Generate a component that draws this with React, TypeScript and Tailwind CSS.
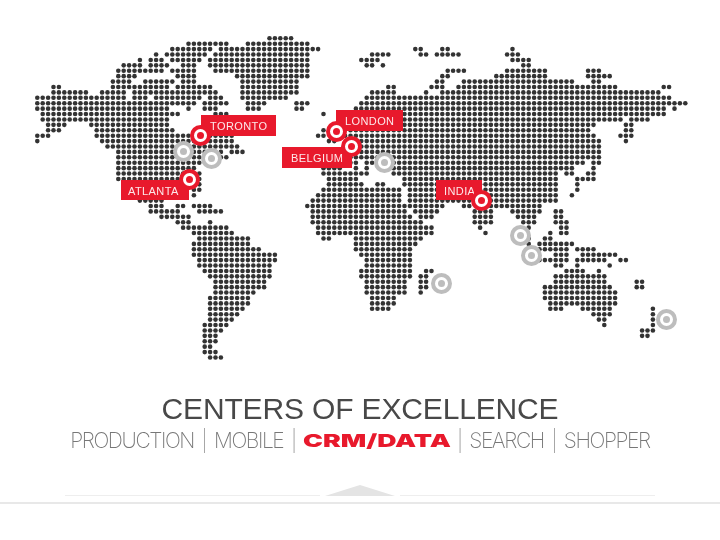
import React from 'react'

// dot map: each row is a list of [from, to] column spans
const ROWS: number[][][] = [
  [[43, 47]],
  [[28, 35], [39, 50]],
  [[25, 32], [34, 52], [70, 71], [75, 76], [88, 88]],
  [[22, 22], [24, 31], [33, 50], [62, 65], [71, 72], [74, 78], [87, 89]],
  [[19, 19], [21, 23], [25, 30], [32, 50], [60, 63], [88, 91]],
  [[16, 19], [21, 24], [27, 29], [32, 50], [61, 62], [64, 64], [90, 91]],
  [[15, 23], [25, 29], [33, 50], [76, 79], [87, 94], [102, 104]],
  [[15, 18], [26, 29], [37, 50], [75, 76], [85, 94], [102, 106]],
  [[14, 17], [20, 25], [27, 29], [38, 48], [74, 75], [79, 99], [103, 104]],
  [[3, 4], [14, 24], [26, 32], [38, 48], [65, 66], [73, 75], [78, 107], [116, 117]],
  [[3, 9], [12, 16], [18, 33], [38, 48], [62, 66], [72, 72], [75, 115]],
  [[0, 16], [18, 20], [22, 30], [32, 34], [38, 46], [61, 117]],
  [[0, 29], [31, 35], [39, 42], [48, 50], [60, 120]],
  [[0, 24], [28, 28], [31, 33], [39, 41], [48, 49], [59, 116], [118, 118]],
  [[1, 26], [33, 35], [53, 53], [60, 116]],
  [[1, 24], [60, 108], [110, 113]],
  [[2, 5], [10, 24], [60, 103], [109, 110]],
  [[2, 4], [11, 25], [53, 53], [58, 102], [109, 110]],
  [[0, 2], [11, 36], [52, 53], [57, 103], [108, 110]],
  [[0, 0], [12, 36], [54, 55], [59, 104], [109, 109]],
  [[13, 36], [37, 37], [59, 104]],
  [[15, 34], [36, 38], [58, 104]],
  [[15, 35], [58, 104]],
  [[15, 30], [58, 59], [61, 62], [66, 101], [103, 104]],
  [[15, 29], [53, 56], [59, 59], [61, 61], [66, 99], [103, 103]],
  [[15, 30], [53, 61], [66, 96], [98, 99], [102, 103]],
  [[15, 30], [54, 59], [68, 96], [100, 103]],
  [[28, 30], [54, 60], [63, 64], [68, 96], [100, 100]],
  [[29, 30], [53, 67], [69, 96], [100, 100]],
  [[29, 29], [52, 67], [69, 96], [99, 99]],
  [[19, 23], [51, 67], [69, 96]],
  [[21, 23], [26, 27], [29, 32], [50, 75], [79, 80], [84, 93]],
  [[21, 26], [30, 34], [51, 68], [70, 74], [81, 84], [88, 93], [96, 97]],
  [[23, 28], [51, 69], [71, 73], [81, 84], [89, 92], [96, 97]],
  [[26, 28], [32, 32], [51, 71], [81, 84], [90, 92], [96, 98]],
  [[27, 35], [52, 73], [82, 82], [91, 91], [97, 98]],
  [[29, 36], [52, 73], [83, 83], [95, 95], [97, 98]],
  [[30, 39], [53, 54], [59, 71], [91, 91], [94, 95]],
  [[29, 39], [59, 70], [91, 91], [93, 99]],
  [[29, 41], [59, 69], [93, 98], [100, 103]],
  [[29, 44], [60, 69], [96, 98], [101, 107]],
  [[30, 44], [61, 69], [93, 98], [100, 105], [108, 109]],
  [[30, 43], [61, 69], [96, 97], [100, 100], [106, 106]],
  [[31, 43], [60, 69], [72, 73], [98, 101], [104, 104]],
  [[32, 43], [60, 69], [71, 72], [96, 105]],
  [[33, 42], [61, 68], [71, 72], [96, 105], [111, 112]],
  [[33, 42], [61, 68], [71, 72], [94, 106], [111, 112]],
  [[33, 40], [61, 68], [71, 71], [94, 107]],
  [[32, 39], [62, 66], [94, 107]],
  [[32, 39], [62, 66], [95, 107]],
  [[32, 38], [62, 65], [95, 97], [101, 106], [114, 114]],
  [[32, 37], [103, 106], [114, 114]],
  [[32, 36], [104, 105], [114, 114]],
  [[31, 35], [105, 105], [114, 114]],
  [[31, 34], [112, 114]],
  [[31, 33], [112, 113]],
  [[31, 33]],
  [[31, 32]],
  [[31, 33]],
  [[32, 34]],
]

const LABELS = [
  { text: 'TORONTO', x: 201, y: 115, w: 75, h: 21, pad: 9 },
  { text: 'ATLANTA', x: 121, y: 180, w: 68, h: 20, pad: 7 },
  { text: 'LONDON', x: 336, y: 110, w: 67, h: 21, pad: 9 },
  { text: 'BELGIUM', x: 282, y: 147, w: 70, h: 21, pad: 9 },
  { text: 'INDIA', x: 436, y: 180, w: 46, h: 20, pad: 8 },
]

const GREY_PINS = [
  [183.7, 151.7],
  [211, 158],
  [384.3, 162.7],
  [520.3, 235.7],
  [531, 255],
  [441.7, 283],
  [666.3, 319.7],
]

const RED_PINS = [
  [200, 135.7],
  [189, 179.3],
  [336, 131],
  [351.5, 146.7],
  [481.7, 200.7],
]

function DotMap() {
  const dots: React.ReactNode[] = []
  ROWS.forEach((spans, r) => {
    spans.forEach(([from, to]) => {
      for (let c = from; c <= to; c++) {
        dots.push(<circle key={`${r}-${c}`} cx={37.3 + c * 5.4} cy={38.3 + r * 5.41} r={2.3} />)
      }
    })
  })
  return (
    <svg width="720" height="370" className="block" fill="#333333">
      {dots}
    </svg>
  )
}

function Pin({ x, y, red }: { x: number; y: number; red?: boolean }) {
  return (
    <div
      className={`absolute w-[21px] h-[21px] -ml-[10.5px] -mt-[10.5px] rounded-full bg-white border-[4px] flex items-center justify-center ${
        red ? 'border-[#e8192c]' : 'border-[#bdbdbd]'
      }`}
      style={{ left: x, top: y }}
    >
      <div className={`w-[7px] h-[7px] rounded-full ${red ? 'bg-[#e8192c]' : 'bg-[#bdbdbd]'}`} />
    </div>
  )
}

export default function App() {
  return (
    <div className="w-[720px] h-[540px] bg-white overflow-hidden flex flex-col blur-[0.35px] font-['Liberation_Sans',_Arial,_sans-serif]">
      {/* Map */}
      <div className="relative h-[370px] shrink-0">
        <DotMap />
        {GREY_PINS.map(([x, y]) => (
          <Pin key={`${x}-${y}`} x={x} y={y} />
        ))}
        {LABELS.map((l) => (
          <div
            key={l.text}
            className="absolute bg-[#e8192c] text-white/90 text-[11px] flex items-center pt-[2px] tracking-[0.4px]"
            style={{ left: l.x, top: l.y, width: l.w, height: l.h, paddingLeft: l.pad }}
          >
            {l.text}
          </div>
        ))}
        {RED_PINS.map(([x, y]) => (
          <Pin key={`${x}-${y}`} x={x} y={y} red />
        ))}
      </div>

      {/* Heading */}
      <div className="flex flex-col items-center">
        <h1 className="mt-[21px] text-[30px] leading-[36px] text-[#484848] tracking-[-0.15px] whitespace-nowrap">
          CENTERS OF EXCELLENCE
        </h1>
        <p className="flex items-center gap-[7.6px] text-[21px] leading-[26px] font-['Inter',_sans-serif] font-extralight text-[#777777] tracking-[-1.4px] whitespace-nowrap">
          <span>PRODUCTION</span>
          <span className="text-[#999999]">|</span>
          <span>MOBILE</span>
          <span className="text-[#999999]">|</span>
          <span className="w-[146px]">
            <span className="inline-block origin-left scale-x-[1.48] text-[18px] font-black tracking-[0px] text-[#e8192c]">
              CRM/DATA
            </span>
          </span>
          <span className="text-[#999999]">|</span>
          <span>SEARCH</span>
          <span className="text-[#999999]">|</span>
          <span>SHOPPER</span>
        </p>
      </div>

      {/* Footer rule */}
      <div className="mt-[31px] flex items-end justify-center gap-[5px] px-[65px]">
        <div className="flex-1 h-px bg-[#eeeeee]" />
        <svg width="70" height="11" className="block shrink-0">
          <polygon points="0,11 35,0 70,11" fill="#e4e4e4" />
        </svg>
        <div className="flex-1 h-px bg-[#eeeeee]" />
      </div>
      <div className="mt-[6px] h-[2px] bg-[#e8e8e8]" />
    </div>
  )
}
